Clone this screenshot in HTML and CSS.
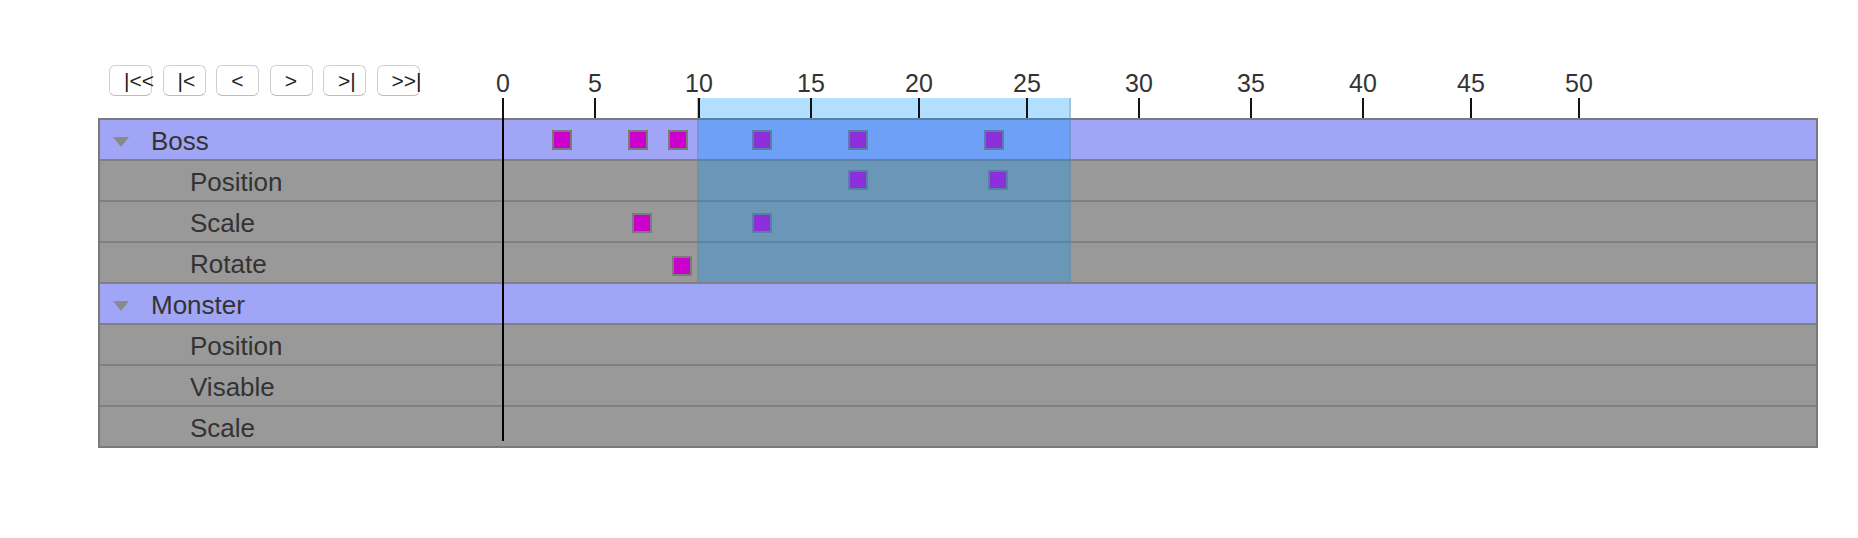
FILE: index.html
```html
<!DOCTYPE html>
<html lang="en">
<head>
    <meta charset="UTF-8">
    <meta name="viewport" content="width=device-width, initial-scale=1.0">
    <title>Timeline</title>
    <link rel="stylesheet" href="styles.css">
</head>
<body>
    <div class="timeline">
        <div class="header">
            <div class="controls">
                <span class="btn" role="button">|&lt;&lt;</span>
                <span class="btn" role="button">|&lt;</span>
                <span class="btn" role="button">&lt;</span>
                <span class="btn" role="button">&gt;</span>
                <span class="btn" role="button">&gt;|</span>
                <span class="btn" role="button">&gt;&gt;|</span>
            </div>
            <div class="ruler">
                <span class="mark" style="left:1px"><span class="tick"></span><span class="num">0</span></span>
                <span class="mark" style="left:93px"><span class="tick"></span><span class="num">5</span></span>
                <span class="mark" style="left:197px"><span class="tick"></span><span class="num">10</span></span>
                <span class="mark" style="left:309px"><span class="tick"></span><span class="num">15</span></span>
                <span class="mark" style="left:417px"><span class="tick"></span><span class="num">20</span></span>
                <span class="mark" style="left:525px"><span class="tick"></span><span class="num">25</span></span>
                <span class="mark" style="left:637px"><span class="tick"></span><span class="num">30</span></span>
                <span class="mark" style="left:749px"><span class="tick"></span><span class="num">35</span></span>
                <span class="mark" style="left:861px"><span class="tick"></span><span class="num">40</span></span>
                <span class="mark" style="left:969px"><span class="tick"></span><span class="num">45</span></span>
                <span class="mark" style="left:1077px"><span class="tick"></span><span class="num">50</span></span>
            </div>
        </div>

        <div class="tracks">
            <div class="row group">
                <div class="label"><span class="arrow"></span>Boss</div>
                <div class="lane">
                    <span class="key" style="left:50px;top:10px"></span>
                    <span class="key" style="left:126px;top:10px"></span>
                    <span class="key" style="left:166px;top:10px"></span>
                    <span class="key" style="left:250px;top:10px"></span>
                    <span class="key" style="left:346px;top:10px"></span>
                    <span class="key" style="left:482px;top:10px"></span>
                </div>
            </div>
            <div class="row sub">
                <div class="label">Position</div>
                <div class="lane">
                    <span class="key" style="left:346px;top:9px"></span>
                    <span class="key" style="left:486px;top:9px"></span>
                </div>
            </div>
            <div class="row sub">
                <div class="label">Scale</div>
                <div class="lane">
                    <span class="key" style="left:130px;top:11px"></span>
                    <span class="key" style="left:250px;top:11px"></span>
                </div>
            </div>
            <div class="row sub">
                <div class="label">Rotate</div>
                <div class="lane">
                    <span class="key" style="left:170px;top:13px"></span>
                </div>
            </div>
            <div class="row group">
                <div class="label"><span class="arrow"></span>Monster</div>
                <div class="lane"></div>
            </div>
            <div class="row sub">
                <div class="label">Position</div>
                <div class="lane"></div>
            </div>
            <div class="row sub">
                <div class="label">Visable</div>
                <div class="lane"></div>
            </div>
            <div class="row sub">
                <div class="label">Scale</div>
                <div class="lane"></div>
            </div>
        </div>

        <div class="selection"></div>
        <div class="playhead"></div>
    </div>
</body>
</html>
```

FILE: styles.css
```css
body {
    margin: 0;
    padding-top: 60px;
    font-family: "Liberation Sans", Arial, sans-serif;
    background-color: #ffffff;
    color: #333333;
}
.timeline {
    position: relative;
    width: 1720px;
    margin-left: 98px;
}
.header {
    display: flex;
    height: 58px;
}
.controls {
    width: 404px;
    display: flex;
    align-items: flex-start;
    gap: 10.5px;
    padding: 5px 0 0 11px;
    box-sizing: border-box;
}
.btn {
    width: 43px;
    height: 31px;
    box-sizing: border-box;
    padding: 1px 14px 0;
    border: 1px solid #cfcfcf;
    border-bottom-color: #bdbdbd;
    border-radius: 6px;
    background-color: #ffffff;
    color: #222222;
    font-size: 21px;
    line-height: 28px;
    text-align: center;
    white-space: nowrap;
    cursor: pointer;
}
.ruler {
    flex: 1;
    position: relative;
    z-index: 1;
}
.mark {
    position: absolute;
    bottom: 0;
}
.tick {
    position: absolute;
    bottom: 0;
    left: -1px;
    width: 2px;
    height: 20px;
    background-color: #111111;
}
.num {
    position: absolute;
    bottom: 22px;
    left: 0;
    transform: translateX(-50%);
    font-size: 25px;
    line-height: 25px;
    color: #333333;
}
.tracks {
    border: 2px solid #7a7a7a;
}
.row {
    display: flex;
    height: 39px;
    border-bottom: 2px solid #808080;
    background-color: #999999;
}
.row:last-child {
    border-bottom: none;
}
.row.group {
    background-color: #a0a5f5;
}
.label {
    width: 402px;
    display: flex;
    align-items: center;
    padding: 4px 0 0 90px;
    box-sizing: border-box;
    font-size: 26px;
    color: #333333;
}
.group .label {
    padding-left: 12px;
}
.arrow {
    width: 0;
    height: 0;
    margin: 0 22px 0 1px;
    border-left: 8px solid transparent;
    border-right: 8px solid transparent;
    border-top: 10px solid #8a8a8a;
}
.lane {
    flex: 1;
    position: relative;
}
.key {
    position: absolute;
    width: 20px;
    height: 20px;
    box-sizing: border-box;
    border: 2px solid #7a7a7a;
    background-color: #cc00cc;
}
.selection {
    position: absolute;
    left: 599px;
    top: 38px;
    width: 374px;
    height: 184px;
    box-sizing: border-box;
    background-color: rgba(0, 150, 255, 0.3);
    border-left: 2px solid rgba(128, 128, 128, 0.25);
    border-right: 2px solid rgba(128, 128, 128, 0.3);
}
.playhead {
    position: absolute;
    left: 404px;
    top: 38px;
    width: 2px;
    height: 343px;
    background-color: #000000;
}
```
